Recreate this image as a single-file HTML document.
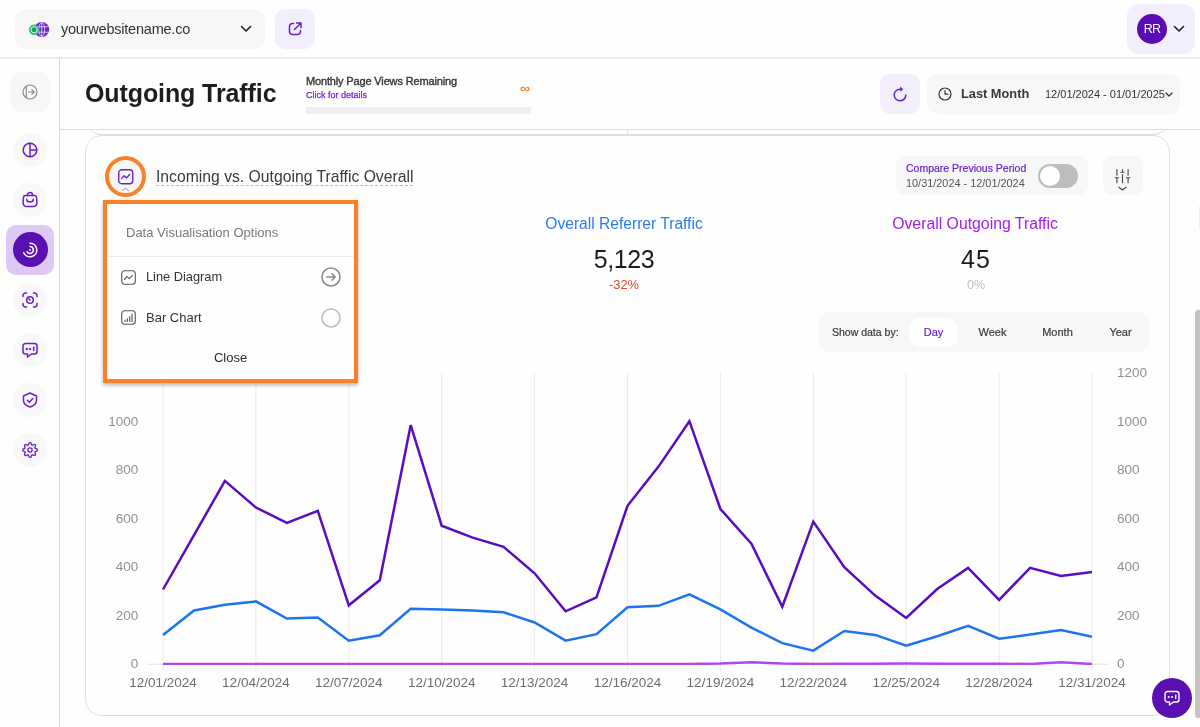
<!DOCTYPE html>
<html><head><meta charset="utf-8">
<style>
*{box-sizing:border-box;margin:0;padding:0}
html,body{width:1200px;height:727px;overflow:hidden;background:#fefefe;font-family:"Liberation Sans",sans-serif;color:#222}
.abs{position:absolute}
#topbar{position:absolute;left:0;top:0;width:1200px;height:58.500px;background:#fefefe;}
#side{position:absolute;left:0;top:58px;width:60px;height:669px;background:#fefefe;border-right:1px solid #dadada}
#hdr{position:absolute;left:60px;top:58px;width:1140px;height:72px;background:#fefefe;border-bottom:1px solid #dcdcdc}
.t{position:absolute;white-space:nowrap;line-height:1;will-change:transform}
.navc{position:absolute;left:13px;width:34px;height:34px;border-radius:50%;background:#f8f8f8}
svg{position:absolute;overflow:visible;will-change:transform}
</style></head><body>

<!-- TOP BAR -->
<div id="topbar">
  <div class="abs" style="left:15px;top:9px;width:250px;height:40px;border-radius:10px;background:#f7f7f7"></div>
  <svg style="left:27px;top:20.500px" width="24" height="18" viewBox="0 0 24 18">
    <circle cx="14.700" cy="8.500" r="7.500" fill="#6a1fc4"/>
    <g stroke="#e4d4f7" stroke-width="0.900" fill="none"><ellipse cx="14.700" cy="8.500" rx="3" ry="7"/><line x1="8" y1="5.800" x2="21.500" y2="5.800"/><line x1="8" y1="11.200" x2="21.500" y2="11.200"/><line x1="14.700" y1="1.500" x2="14.700" y2="15.500"/></g>
    <circle cx="7.100" cy="8.700" r="5.200" fill="#2dbd7e"/>
    <circle cx="7.100" cy="8.700" r="3.100" fill="#10a558" stroke="#eaf8f0" stroke-width="1"/>
  </svg>
  <div class="t" style="left:61px;top:21.500px;font-size:14.500px;letter-spacing:-0.220px;color:#333">yourwebsitename.co</div>
  <svg style="left:240.300px;top:24.800px" width="12" height="8" viewBox="0 0 12 8"><path d="M1.5 1.5 L6 6 L10.5 1.5" fill="none" stroke="#222" stroke-width="1.6" stroke-linecap="round" stroke-linejoin="round"/></svg>
  <div class="abs" style="left:275px;top:9px;width:40px;height:40px;border-radius:10px;background:#f3eefc"></div>
  <svg style="left:288px;top:22px" width="14" height="14" viewBox="0 0 14 14" fill="none" stroke="#6a1fc4" stroke-width="1.5" stroke-linecap="round" stroke-linejoin="round"><path d="M5.500 1.500H4.500a3 3 0 0 0-3 3v5a3 3 0 0 0 3 3h5a3 3 0 0 0 3-3V8.500"/><path d="M8.5 1h4.500v4.500M12.500 1.500L6.500 7.500"/></svg>
  <div class="abs" style="left:1127px;top:4px;width:68px;height:50px;border-radius:12px;background:#f3eefc"></div>
  <div class="abs" style="left:1136.700px;top:14.300px;width:30px;height:30px;border-radius:50%;background:#5a0bb4"></div>
  <div class="t" style="left:1136.500px;top:23.300px;width:30px;text-align:center;font-size:12.500px;color:#fff;letter-spacing:-0.800px">RR</div>
  <svg style="left:1173px;top:25px" width="12" height="8" viewBox="0 0 12 8"><path d="M1.5 1.500 L6 6 L10.5 1.5" fill="none" stroke="#222" stroke-width="1.6" stroke-linecap="round" stroke-linejoin="round"/></svg>
</div>

<!-- SIDEBAR -->
<div id="side">
  <div class="abs" style="left:10px;top:13.700px;width:40px;height:40px;border-radius:11px;background:#f7f7f7"></div>
  <svg style="left:22px;top:25.600px" width="16" height="16" viewBox="0 0 16 16" fill="none" stroke="#8a8a8a" stroke-width="1.2" stroke-linecap="round" stroke-linejoin="round"><circle cx="8" cy="8" r="7"/><path d="M4.300 2.200V13.800"/><path d="M6.500 8H12M9.800 5.600L12.200 8L9.800 10.400"/></svg>

  <div class="navc" style="top:75px"></div>
  <svg style="left:22px;top:84px" width="16" height="16" viewBox="0 0 16 16" fill="none" stroke="#6a1fc4" stroke-width="1.5" stroke-linecap="round" stroke-linejoin="round"><circle cx="8" cy="8" r="6.800"/><path d="M8 1.200V14.800M8 8H14.800"/></svg>

  <div class="navc" style="top:125px"></div>
  <svg style="left:22px;top:134px" width="16" height="16" viewBox="0 0 16 16" fill="none" stroke="#6a1fc4" stroke-width="1.500" stroke-linecap="round" stroke-linejoin="round"><path d="M3.400 3.600h9.200a1.900 1.900 0 0 1 1.900 1.800l0.400 5.400a3.500 3.500 0 0 1-3.500 3.700h-6.800a3.500 3.500 0 0 1-3.500-3.700l0.400-5.400a1.900 1.900 0 0 1 1.900-1.800z"/><path d="M5.400 3.600V3.100a2.600 2.600 0 0 1 5.200 0v0.500"/><path d="M4.700 7.200a3.300 2.800 0 0 0 6.600 0"/></svg>

  <div class="abs" style="left:6px;top:167px;width:48px;height:49.500px;border-radius:10px;background:#ddc9f3"></div>
  <div class="abs" style="left:12.600px;top:174.200px;width:35px;height:35px;border-radius:50%;background:#5a0fb0"></div>
  <svg style="left:22px;top:184px" width="16" height="16" viewBox="0 0 16 16" fill="none" stroke="#fff" stroke-width="1.500" stroke-linecap="round"><path d="M8 1.200a6.800 6.800 0 1 1-6.300 9.400"/><path d="M8 4.600a3.400 3.400 0 1 1-3 5"/><circle cx="8" cy="8" r="0.900" fill="#fff" stroke="none"/></svg>

  <div class="navc" style="top:225px"></div>
  <svg style="left:22px;top:234px" width="16" height="16" viewBox="0 0 16 16" fill="none" stroke="#6a1fc4" stroke-width="1.5" stroke-linecap="round" stroke-linejoin="round"><path d="M1 4.500V3.500a2.500 2.500 0 0 1 2.500-2.500h1M11.500 1h1a2.500 2.500 0 0 1 2.500 2.500v1M15 11.500v1a2.500 2.500 0 0 1-2.500 2.500h-1M4.500 15h-1a2.500 2.500 0 0 1-2.500-2.500v-1"/><circle cx="8" cy="8" r="3.300"/><path d="M6.800 6.800l1.200 1.200"/></svg>

  <div class="navc" style="top:275px"></div>
  <svg style="left:22px;top:284px" width="16" height="16" viewBox="0 0 16 16" fill="none" stroke="#6a1fc4" stroke-width="1.5" stroke-linecap="round" stroke-linejoin="round"><path d="M3.500 1.500h9a2.500 2.500 0 0 1 2.500 2.500v5.500a2.500 2.500 0 0 1-2.500 2.500H9.500L5.500 15v-3h-2a2.500 2.500 0 0 1-2.500-2.500V4a2.500 2.500 0 0 1 2.500-2.500z"/><path d="M11.700 5.300v3.200"/><circle cx="4.800" cy="7" r="0.450" fill="#6a1fc4"/><circle cx="8.100" cy="7" r="0.450" fill="#6a1fc4"/></svg>

  <div class="navc" style="top:325px"></div>
  <svg style="left:22px;top:334px" width="16" height="16" viewBox="0 0 16 16" fill="none" stroke="#6a1fc4" stroke-width="1.5" stroke-linecap="round" stroke-linejoin="round"><path d="M8 1L14.500 4v4.500c0 3-2.800 5.300-6.500 6.500c-3.700-1.200-6.500-3.500-6.500-6.500V4z"/><path d="M5.300 8.200l2 2l3.500-3.700"/></svg>

  <div class="navc" style="top:375px"></div>
  <svg style="left:22px;top:384px" width="16" height="16" viewBox="0 0 24 24" fill="none" stroke="#6a1fc4" stroke-width="2" stroke-linecap="round" stroke-linejoin="round"><circle cx="12" cy="12" r="3.200"/><path d="M19.400 15a1.650 1.650 0 0 0 .33 1.820l.06.06a2 2 0 1 1-2.830 2.830l-.06-.06a1.650 1.650 0 0 0-1.820-.33 1.650 1.650 0 0 0-1 1.510V21a2 2 0 0 1-4 0v-.09A1.650 1.650 0 0 0 9 19.400a1.650 1.650 0 0 0-1.820.33l-.06.06a2 2 0 1 1-2.830-2.830l.06-.06a1.650 1.650 0 0 0 .33-1.820 1.650 1.650 0 0 0-1.510-1H3a2 2 0 0 1 0-4h.09A1.650 1.650 0 0 0 4.600 9a1.650 1.650 0 0 0-.33-1.820l-.06-.06a2 2 0 1 1 2.830-2.830l.06.06a1.650 1.650 0 0 0 1.820.33H9a1.650 1.650 0 0 0 1-1.510V3a2 2 0 0 1 4 0v.09a1.650 1.650 0 0 0 1 1.510 1.650 1.650 0 0 0 1.820-.33l.06-.06a2 2 0 1 1 2.830 2.830l-.06.06a1.650 1.650 0 0 0-.33 1.820V9a1.650 1.650 0 0 0 1.510 1H21a2 2 0 0 1 0 4h-.09a1.650 1.650 0 0 0-1.510 1z"/></svg>
</div>

<!-- HEADER -->
<div id="hdr">
  <div class="t" style="left:25px;top:23.400px;font-size:25px;font-weight:700;color:#1d1d1d;letter-spacing:-0.1px">Outgoing Traffic</div>
  <div class="t" style="left:246px;top:17.700px;font-size:11px;color:#333;letter-spacing:-0.150px;-webkit-text-stroke:0.350px #333">Monthly Page Views Remaining</div>
  <div class="t" style="left:246px;top:32.700px;font-size:9px;color:#7a1fd6;-webkit-text-stroke:0.250px #7a1fd6">Click for details</div>
  <div class="abs" style="left:246px;top:49.300px;width:225px;height:6.500px;background:#eeeeee"></div>
  <div class="t" style="left:460px;top:22.500px;font-size:14px;color:#fa8029;font-weight:700">&#8734;</div>
  <div class="abs" style="left:820px;top:16px;width:40px;height:40px;border-radius:10px;background:#f3eefc"></div>
  <svg style="left:832px;top:28px" width="16" height="16" viewBox="0 0 16 16" fill="none" stroke="#6a1fc4" stroke-width="1.500" stroke-linecap="round" stroke-linejoin="round"><path d="M8.200 3.200a5.800 5.800 0 1 0 5.600 5.800"/><path d="M8.200 0.600v5.200l3-2.600z" fill="#6a1fc4" stroke="none"/></svg>
  <div class="abs" style="left:867px;top:16px;width:253px;height:40px;border-radius:10px;background:#f7f7f7"></div>
  <svg style="left:878px;top:29px" width="14" height="14" viewBox="0 0 14 14" fill="none" stroke="#333" stroke-width="1.200" stroke-linecap="round" stroke-linejoin="round"><circle cx="7" cy="7" r="6"/><path d="M7 3.500V7.200H9.800"/></svg>
  <div class="t" style="left:900.500px;top:29.500px;font-size:12.800px;font-weight:700;color:#383838">Last Month</div>
  <div class="t" style="left:985px;top:30.500px;font-size:11px;color:#333">12/01/2024 - 01/01/2025</div>
  <svg style="left:1105.300px;top:33.500px" width="8" height="6" viewBox="0 0 8 6"><path d="M1 1L4 4L7 1" fill="none" stroke="#333" stroke-width="1.200" stroke-linecap="round" stroke-linejoin="round"/></svg>
</div>


<div class="abs" style="left:0;top:57px;width:1200px;height:2px;background:#ebebeb;z-index:5"></div>
<!-- MAIN -->
<div id="main" class="abs" style="left:61px;top:131px;width:1139px;height:596px;overflow:hidden">
</div>
<!-- previous card bottom -->
<div class="abs" style="left:85px;top:100px;width:1085px;height:35px;border:1px solid #dedede;border-radius:0 0 17px 17px;border-top:none;clip-path:inset(30.500px 0 0 0)"></div>
<div class="abs" style="left:627px;top:130px;width:1px;height:5px;background:#dedede"></div>
<!-- card -->
<div class="abs" style="left:85px;top:135px;width:1085px;height:581px;border:1px solid #dedede;border-radius:17px;background:#fefefe"></div>
<!--CHART-->
<svg style="left:0;top:0" width="1200" height="727" viewBox="0 0 1200 727">
<line x1="163.0" y1="373" x2="163.0" y2="671" stroke="#eaeaea" stroke-width="1"/>
<line x1="255.9" y1="373" x2="255.9" y2="671" stroke="#eaeaea" stroke-width="1"/>
<line x1="348.8" y1="373" x2="348.8" y2="671" stroke="#eaeaea" stroke-width="1"/>
<line x1="441.7" y1="373" x2="441.7" y2="671" stroke="#eaeaea" stroke-width="1"/>
<line x1="534.6" y1="373" x2="534.6" y2="671" stroke="#eaeaea" stroke-width="1"/>
<line x1="627.5" y1="373" x2="627.5" y2="671" stroke="#eaeaea" stroke-width="1"/>
<line x1="720.4" y1="373" x2="720.4" y2="671" stroke="#eaeaea" stroke-width="1"/>
<line x1="813.3" y1="373" x2="813.3" y2="671" stroke="#eaeaea" stroke-width="1"/>
<line x1="906.2" y1="373" x2="906.2" y2="671" stroke="#eaeaea" stroke-width="1"/>
<line x1="999.1" y1="373" x2="999.1" y2="671" stroke="#eaeaea" stroke-width="1"/>
<line x1="1092.0" y1="373" x2="1092.0" y2="671" stroke="#eaeaea" stroke-width="1"/>
<line x1="147" y1="664.2" x2="163" y2="664.2" stroke="#e4e4e4" stroke-width="1"/>
<line x1="1092" y1="664.2" x2="1108" y2="664.2" stroke="#e0e0e0" stroke-width="1"/>
<path d="M163.0 634.9 L194.0 610.4 L224.9 604.8 L255.9 601.4 L286.9 618.6 L317.8 617.6 L348.8 640.7 L379.8 635.3 L410.7 608.7 L441.7 609.4 L472.7 610.4 L503.6 612.3 L534.6 622.5 L565.6 640.7 L596.5 634.1 L627.5 607.2 L658.5 605.8 L689.4 594.4 L720.4 609.4 L751.4 627.6 L782.3 643.1 L813.3 650.6 L844.3 631.0 L875.2 634.9 L906.2 645.8 L937.2 636.3 L968.1 625.9 L999.1 638.7 L1030.1 634.6 L1061.0 630.0 L1092.0 636.8" fill="none" stroke="#1d74f0" stroke-width="2.5" stroke-linejoin="miter" stroke-linecap="butt"/>
<path d="M163.0 589.5 L194.0 535.2 L224.9 480.9 L255.9 507.5 L286.9 522.8 L317.8 510.9 L348.8 605.3 L379.8 580.3 L410.7 425.1 L441.7 525.7 L472.7 537.6 L503.6 546.8 L534.6 573.3 L565.6 611.3 L596.5 597.3 L627.5 505.8 L658.5 466.6 L689.4 421.2 L720.4 509.0 L751.4 543.7 L782.3 606.7 L813.3 521.6 L844.3 567.2 L875.2 595.6 L906.2 617.9 L937.2 589.0 L968.1 567.9 L999.1 599.9 L1030.1 567.9 L1061.0 575.9 L1092.0 572.1" fill="none" stroke="#5a0cc0" stroke-width="2.5" stroke-linejoin="miter" stroke-linecap="butt"/>
<clipPath id="cp"><rect x="150" y="360" width="960" height="305"/></clipPath>
<path d="M163.0 664.0 L194.0 664.0 L224.9 664.0 L255.9 664.0 L286.9 664.0 L317.8 664.0 L348.8 664.0 L379.8 664.0 L410.7 664.0 L441.7 664.0 L472.7 664.0 L503.6 664.0 L534.6 664.0 L565.6 664.0 L596.5 664.0 L627.5 664.0 L658.5 664.0 L689.4 664.0 L720.4 663.5 L751.4 662.3 L782.3 663.5 L813.3 664.0 L844.3 663.7 L875.2 663.7 L906.2 663.5 L937.2 663.7 L968.1 663.7 L999.1 663.7 L1030.1 664.0 L1061.0 662.3 L1092.0 664.0" fill="none" stroke="#b145ef" stroke-width="2.5" stroke-linejoin="miter" stroke-linecap="butt" clip-path="url(#cp)"/>
<g font-family="Liberation Sans, sans-serif" font-size="13.5" fill="#909090">
<text x="138.300" y="668.3" text-anchor="end">0</text>
<text x="138.300" y="619.8" text-anchor="end">200</text>
<text x="138.300" y="571.3" text-anchor="end">400</text>
<text x="138.300" y="522.8" text-anchor="end">600</text>
<text x="138.300" y="474.3" text-anchor="end">800</text>
<text x="138.300" y="425.8" text-anchor="end">1000</text>
<text x="1117" y="668.3">0</text>
<text x="1117" y="619.8">200</text>
<text x="1117" y="571.3">400</text>
<text x="1117" y="522.8">600</text>
<text x="1117" y="474.3">800</text>
<text x="1117" y="425.8">1000</text>
<text x="1117" y="377.3">1200</text>
</g><g font-family="Liberation Sans, sans-serif" font-size="13.5" fill="#6e6e6e" text-anchor="middle">
<text x="163.0" y="686.8">12/01/2024</text>
<text x="255.9" y="686.8">12/04/2024</text>
<text x="348.8" y="686.8">12/07/2024</text>
<text x="441.7" y="686.8">12/10/2024</text>
<text x="534.6" y="686.8">12/13/2024</text>
<text x="627.5" y="686.8">12/16/2024</text>
<text x="720.4" y="686.8">12/19/2024</text>
<text x="813.3" y="686.8">12/22/2024</text>
<text x="906.2" y="686.8">12/25/2024</text>
<text x="999.1" y="686.8">12/28/2024</text>
<text x="1092.0" y="686.8">12/31/2024</text>
</g></svg>
<!--/CHART-->

<!-- card header -->
<div class="abs" style="left:105px;top:156px;width:41px;height:41px;border-radius:50%;border:4px solid #fa8029;background:#f6f6f6"></div>
<svg style="left:118.200px;top:168.600px" width="15.500" height="15.500" viewBox="0 0 15 15" fill="none" stroke="#6a1fc4" stroke-width="1.300" stroke-linecap="round" stroke-linejoin="round"><rect x="0.700" y="0.700" width="13.600" height="13.600" rx="3"/><path d="M3.500 9.300L5.800 6.600L8.300 8.600L11.300 5.400"/></svg>
<svg style="left:121.300px;top:187px" width="9" height="5" viewBox="0 0 9 5"><path d="M1 4L4.500 1L8 4" fill="none" stroke="#9a9a9a" stroke-width="1"/></svg>
<div class="t" style="left:156px;top:169px;font-size:15.720px;color:#3a3a3a;border-bottom:1px dashed #bdbdbd;padding-bottom:0.300px">Incoming vs. Outgoing Traffic Overall</div>

<div class="abs" style="left:896px;top:156px;width:192px;height:39px;border-radius:9px;background:#f7f7f7"></div>
<div class="t" style="left:906px;top:163px;font-size:10.500px;color:#6a1fc4;-webkit-text-stroke:0.200px #6a1fc4">Compare Previous Period</div>
<div class="t" style="left:906px;top:178px;font-size:10.900px;color:#555">10/31/2024 - 12/01/2024</div>
<div class="abs" style="left:1037.500px;top:163.500px;width:40px;height:24.500px;border-radius:13px;background:#bdbdbd"></div>
<div class="abs" style="left:1039.500px;top:165.500px;width:20.500px;height:20.500px;border-radius:50%;background:#fff"></div>
<div class="abs" style="left:1103px;top:156px;width:40px;height:39px;border-radius:9px;background:#f7f7f7"></div>
<svg style="left:1116px;top:169px" width="14" height="22" viewBox="0 0 14 22" fill="none" stroke="#444" stroke-width="1.100" stroke-linecap="round"><path d="M0.900 0.500V6.300M0.900 8.700V13.800M-0.800 8.700H2.600M6.500 0.500V3.200M6.500 5.600V13.800M4.800 3.200H8.200M12.100 0.500V6.300M12.100 8.700V13.800M10.400 8.700H13.800"/><path d="M3 18.200L6.500 21L10 18.200" stroke-linejoin="round"/></svg>

<!-- stats -->
<div class="t" style="left:423.500px;top:216px;width:400px;text-align:center;font-size:15.600px;color:#2a7cf0">Overall Referrer Traffic</div>
<div class="t" style="left:424px;top:247px;width:400px;text-align:center;font-size:25px;letter-spacing:-0.400px;color:#1d1d1d">5,123</div>
<div class="t" style="left:423.500px;top:279px;width:400px;text-align:center;font-size:12.900px;color:#e8452c">-32%</div>
<div class="t" style="left:775px;top:216px;width:400px;text-align:center;font-size:15.800px;color:#a51ee6">Overall Outgoing Traffic</div>
<div class="t" style="left:775.500px;top:247px;width:400px;text-align:center;font-size:25px;letter-spacing:1px;color:#1d1d1d">45</div>
<div class="t" style="left:776px;top:279px;width:400px;text-align:center;font-size:12.500px;color:#bdbdbd">0%</div>

<!-- show data by -->
<div class="abs" style="left:819px;top:311.700px;width:330px;height:40px;border-radius:11px;background:#f7f7f7"></div>
<div class="t" style="left:832px;top:326.600px;font-size:10.500px;color:#3a3a3a;-webkit-text-stroke:0.200px #3a3a3a">Show data by:</div>
<div class="abs" style="left:909px;top:317.700px;width:49px;height:29px;border-radius:10px;background:#fefefe"></div>
<div class="t" style="left:909px;top:326.600px;width:49px;text-align:center;font-size:11px;color:#6a1fc4;-webkit-text-stroke:0.200px #6a1fc4">Day</div>
<div class="t" style="left:968px;top:326.600px;width:49px;text-align:center;font-size:11px;color:#3a3a3a;-webkit-text-stroke:0.200px #3a3a3a">Week</div>
<div class="t" style="left:1033px;top:326.600px;width:49px;text-align:center;font-size:11px;color:#3a3a3a;-webkit-text-stroke:0.200px #3a3a3a">Month</div>
<div class="t" style="left:1096px;top:326.600px;width:49px;text-align:center;font-size:11px;color:#3a3a3a;-webkit-text-stroke:0.200px #3a3a3a">Year</div>

<!-- popup -->
<div class="abs" style="left:103px;top:200px;width:255px;height:183px;border:4px solid #fa8029;background:#fefefe;box-shadow:0 2px 4px rgba(0,0,0,0.30)"></div>
<div class="t" style="left:126px;top:226px;font-size:13px;color:#777">Data Visualisation Options</div>
<div class="abs" style="left:107px;top:256px;width:247px;height:1px;background:#ebebeb"></div>
<svg style="left:121px;top:270px" width="15" height="15" viewBox="0 0 15 15" fill="none" stroke="#555" stroke-width="1.100" stroke-linecap="round" stroke-linejoin="round"><rect x="0.700" y="0.700" width="13.600" height="13.600" rx="3"/><path d="M3.500 9.300L5.800 6.600L8.300 8.600L11.300 5.400"/></svg>
<div class="t" style="left:146px;top:271px;font-size:12.800px;color:#333">Line Diagram</div>
<svg style="left:320.700px;top:267.300px" width="20" height="20" viewBox="0 0 19 19" fill="none" stroke="#8a8a8a" stroke-width="1.500" stroke-linecap="round" stroke-linejoin="round"><circle cx="9.500" cy="9.500" r="8.600"/><path d="M5.500 9.500H13.500M10.500 6.500L13.500 9.500L10.500 12.500"/></svg>
<svg style="left:121px;top:310px" width="15" height="15" viewBox="0 0 15 15" fill="none" stroke="#555" stroke-width="1.100" stroke-linecap="round" stroke-linejoin="round"><rect x="0.700" y="0.700" width="13.600" height="13.600" rx="3"/><path d="M4 11.500V10M6.300 11.500V8.500M8.700 11.500V6.500M11 11.500V4"/></svg>
<div class="t" style="left:146px;top:311px;font-size:13px;color:#333">Bar Chart</div>
<svg style="left:320.700px;top:307.500px" width="20" height="20" viewBox="0 0 19 19" fill="none" stroke="#bdbdbd" stroke-width="1.500"><circle cx="9.500" cy="9.500" r="8.600"/></svg>
<div class="t" style="left:103px;top:351px;width:255px;text-align:center;font-size:13px;color:#2b2b2b">Close</div>

<!-- scrollbar -->
<div class="abs" style="left:1195px;top:310px;width:5px;height:408px;background:#c4c4c4;border-radius:3px 0 0 3px"></div>
<div class="abs" style="left:1198.500px;top:206px;width:1.500px;height:23px;background:#f0f0f0"></div>

<!-- chat fab -->
<div class="abs" style="left:1152px;top:678px;width:40px;height:40px;border-radius:50%;background:#5a0fb0"></div>
<svg style="left:1164px;top:690px" width="16" height="16" viewBox="0 0 16 16" fill="none" stroke="#fff" stroke-width="1.400" stroke-linecap="round" stroke-linejoin="round"><path d="M3.500 1.500h9a2.500 2.500 0 0 1 2.500 2.500v5.500a2.500 2.500 0 0 1-2.500 2.500H9.500L5.500 15v-3h-2a2.500 2.500 0 0 1-2.500-2.500V4a2.500 2.500 0 0 1 2.500-2.500z"/><path d="M11.700 5.300v3.200"/><circle cx="4.800" cy="7" r="0.400" fill="#fff"/><circle cx="8.100" cy="7" r="0.400" fill="#fff"/></svg>

</body></html>
